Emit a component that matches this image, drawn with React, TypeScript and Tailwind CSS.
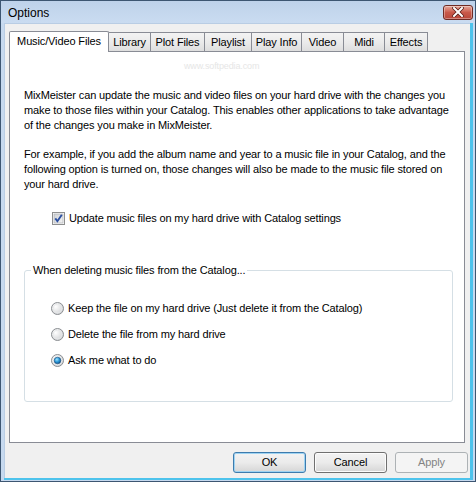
import { ReactNode } from 'react';

const tabs = [
  { label: 'Library', w: 'w-[42px]' },
  { label: 'Plot Files', w: 'w-[54px]' },
  { label: 'Playlist', w: 'w-[47px]' },
  { label: 'Play Info', w: 'w-[50px]' },
  { label: 'Video', w: 'w-[42px]' },
  { label: 'Midi', w: 'w-[41px]' },
  { label: 'Effects', w: 'w-[43px]' }
];

const CloseButton = () => (
  <div className="w-[30px] h-[15px] rounded-[3px] border border-[#6f2b24] bg-gradient-to-b from-[#e6a99d] via-[#c9594a] to-[#b8473a] flex items-center justify-center shadow-[inset_0_0_0_1px_rgba(255,255,255,0.35)]">
    <svg width="12" height="10" viewBox="0 0 12 10">
      <path d="M2 1 L10 9 M10 1 L2 9" stroke="#5a1e18" strokeWidth="3.6" strokeLinecap="square" />
      <path d="M2 1 L10 9 M10 1 L2 9" stroke="#ffffff" strokeWidth="2" strokeLinecap="square" />
    </svg>
  </div>
);

const Checkbox = () => (
  <svg width="13" height="13" viewBox="0 0 13 13" className="shrink-0">
    <defs>
      <linearGradient id="cbg" x1="0" y1="0" x2="1" y2="1">
        <stop offset="0" stopColor="#cfd2d6" />
        <stop offset="1" stopColor="#f4f4f4" />
      </linearGradient>
    </defs>
    <rect x="0.5" y="0.5" width="12" height="12" fill="#ffffff" stroke="#8e8f8f" />
    <rect x="2" y="2" width="9" height="9" fill="url(#cbg)" stroke="#b4b7bb" strokeWidth="0.8" />
    <path d="M3.3 6.4 L5.4 9.2 L9.8 2.8" fill="none" stroke="#2b4fa1" strokeWidth="1.9" />
  </svg>
);

const Radio = ({ checked }: { checked?: boolean }) => (
  <svg width="13" height="13" viewBox="0 0 13 13" className="shrink-0">
    <defs>
      <radialGradient id="rbg" cx="0.35" cy="0.35" r="0.8">
        <stop offset="0" stopColor="#ffffff" />
        <stop offset="1" stopColor="#c9cbce" />
      </radialGradient>
      <radialGradient id="rdot" cx="0.4" cy="0.35" r="0.7">
        <stop offset="0" stopColor="#9fe4ff" />
        <stop offset="0.5" stopColor="#2e9ad8" />
        <stop offset="1" stopColor="#0b4d86" />
      </radialGradient>
    </defs>
    <circle cx="6.5" cy="6.5" r="6" fill="url(#rbg)" stroke="#8b8e92" />
    <circle cx="6.5" cy="6.5" r="4.3" fill="none" stroke="#e7e8ea" strokeWidth="0.8" />
    {checked && <circle cx="6.5" cy="6.5" r="3.3" fill="url(#rdot)" stroke="#1a4e7e" strokeWidth="0.6" />}
  </svg>
);

const RadioRow = ({ checked, children }: { checked?: boolean; children: ReactNode }) => (
  <div className="flex items-center gap-[4px] h-[14px]">
    <Radio checked={checked} />
    <span>{children}</span>
  </div>
);

const Button = ({ children, kind }: { children: ReactNode; kind: 'default' | 'normal' | 'disabled' }) => {
  const cls =
    kind === 'default'
      ? 'border-[#3d7bad] bg-gradient-to-b from-[#f3f3f3] via-[#ebebeb] to-[#d6d6d6] text-black shadow-[inset_0_0_0_1px_#9ed3f2]'
      : kind === 'normal'
        ? 'border-[#707070] bg-gradient-to-b from-[#f3f3f3] via-[#ebebeb] to-[#d6d6d6] text-black shadow-[inset_0_0_0_1px_#fcfcfc]'
        : 'border-[#adb2b5] bg-[#f4f4f4] text-[#838383]';
  return (
    <div className={`w-[73px] h-[21px] rounded-[3px] border flex items-center justify-center ${cls}`}>{children}</div>
  );
};

export default function App() {
  return (
    <div className="w-[476px] h-[482px] border border-[#3d5672] bg-[#c6d9ef] flex flex-col font-['Liberation_Sans',Arial,sans-serif] text-[11px] tracking-[-0.13px] text-black overflow-hidden">
      <div className="h-[22px] shrink-0 flex items-center justify-between pl-[7px] pr-[2px] bg-gradient-to-b from-[#bed2ea] to-[#cadcf1]">
        <span className="text-[12px] tracking-normal text-[#000] pt-[2px]">Options</span>
        <CloseButton />
      </div>

      <div className="flex-1 ml-[3px] mr-[2px] border-r-[3px] border-b-[2px] border-r-[#4dc3ec] border-b-[#4dc3ec]">
        <div className="h-full bg-[#f0f0f0] border-t border-l border-[#b9cde4] flex flex-col">
          <div className="pl-[4px] pt-[6px]">
            <div className="flex items-end h-[21px] relative z-10">
              <div className="w-[100px] h-[21px] bg-white border border-b-0 border-[#898c95] flex items-center justify-center pb-[2px] -mb-[1px] rounded-t-[2px]">
                Music/Video Files
              </div>
              {tabs.map(t => (
                <div
                  key={t.label}
                  className={`${t.w} h-[19px] border-t border-r border-[#898c95] bg-gradient-to-b from-[#f3f3f3] via-[#ebebeb] to-[#dedede] flex items-center justify-center`}
                >
                  {t.label}
                </div>
              ))}
            </div>

            <div className="relative w-[456px] h-[392px] border border-[#898c95] bg-white pl-[14px] pr-[10px] pt-[36px]">
              <div className="absolute top-[8px] left-[174px] text-[9px] text-[#e6e6e6]">www.softpedia.com</div>
              <p className="leading-[15px] whitespace-nowrap">
                MixMeister can update the music and video files on your hard drive with the changes you
                <br />
                make to those files within your Catalog. This enables other applications to take advantage
                <br />
                of the changes you make in MixMeister.
              </p>
              <p className="leading-[15px] whitespace-nowrap mt-[14px]">
                For example, if you add the album name and year to a music file in your Catalog, and the
                <br />
                following option is turned on, those changes will also be made to the music file stored on
                <br />
                your hard drive.
              </p>
              <div className="flex items-center gap-[4px] h-[14px] mt-[19px] ml-[28px]">
                <Checkbox />
                <span>Update music files on my hard drive with Catalog settings</span>
              </div>

              <div className="relative mt-[45px] w-[429px] h-[132px] border border-[#d5dfe5] rounded-[3px]">
                <span className="absolute -top-[8px] left-[6px] bg-white px-[2px] leading-[15px]">
                  When deleting music files from the Catalog...
                </span>
                <div className="flex flex-col gap-[12px] pl-[26px] pt-[30px]">
                  <RadioRow>Keep the file on my hard drive (Just delete it from the Catalog)</RadioRow>
                  <RadioRow>Delete the file from my hard drive</RadioRow>
                  <RadioRow checked>Ask me what to do</RadioRow>
                </div>
              </div>
            </div>
          </div>

          <div className="flex justify-end gap-[8px] pr-[2px] mt-[9px]">
            <Button kind="default">OK</Button>
            <Button kind="normal">Cancel</Button>
            <Button kind="disabled">Apply</Button>
          </div>
        </div>
      </div>
      <div className="h-[1px]" />
    </div>
  );
}
